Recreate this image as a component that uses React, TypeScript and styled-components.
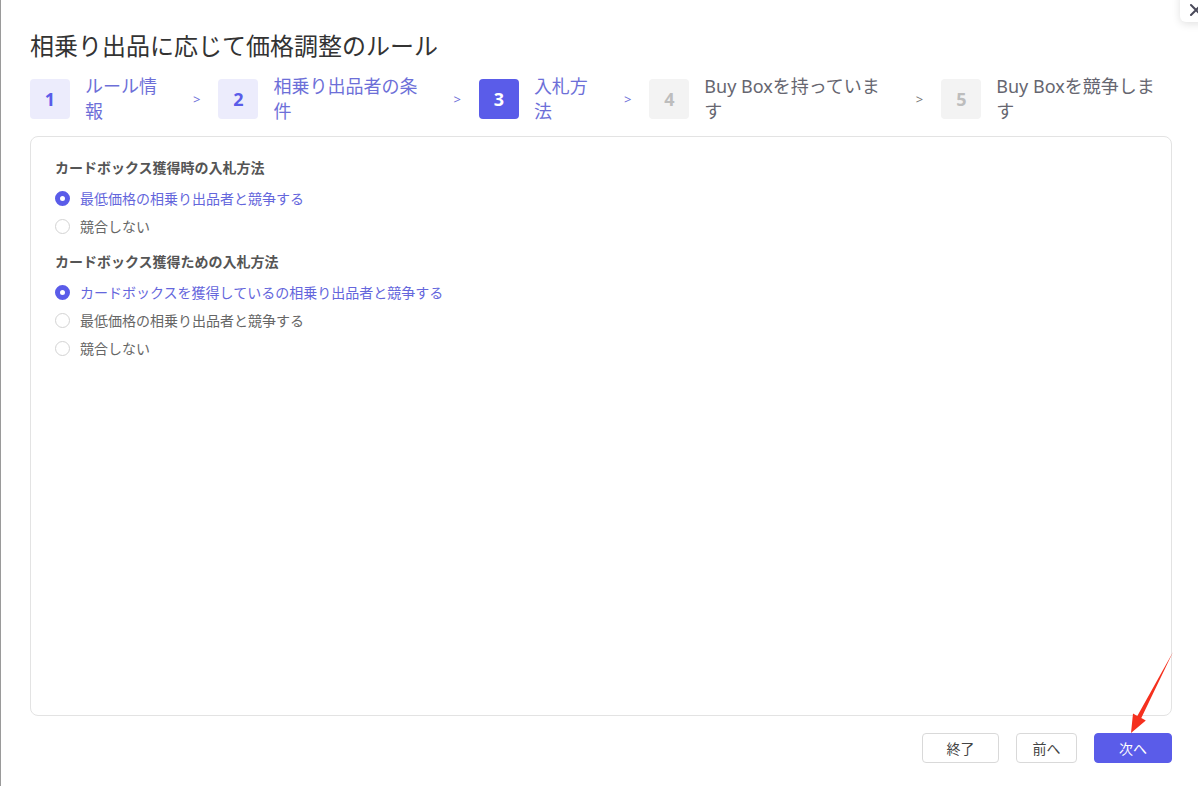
import React from "react";
import styled, { createGlobalStyle } from "styled-components";

const GlobalStyle = createGlobalStyle`
  html, body { margin: 0; padding: 0; background: #ffffff; }
  body { font-family: "Noto Sans", "Noto Sans CJK JP", sans-serif; }
  * { box-sizing: border-box; }
`;

const PRIMARY = "#5a5ce9";

const Page = styled.div`
  position: relative;
  height: 786px;
  display: flex;
  flex-direction: column;
  padding: 29px 26px 23px 29px;
  border-left: 1px solid #9a9a9a;
  overflow: hidden;
`;

const Title = styled.h1`
  margin: 0;
  font-size: 24px;
  line-height: 32px;
  font-weight: 400;
  color: #333333;
  font-family: "Noto Sans CJK JP", sans-serif;
`;

const Steps = styled.div`
  display: flex;
  align-items: center;
  margin-top: 13px;
  height: 50px;
`;

const Step = styled.div`
  display: flex;
  align-items: center;
`;

type StepState = "done" | "active" | "todo";

const StepBox = styled.div<{ $state: StepState }>`
  width: 40px;
  height: 40px;
  border-radius: 4px;
  display: flex;
  align-items: center;
  justify-content: center;
  font-family: "Noto Sans", sans-serif;
  font-weight: 700;
  font-size: 18px;
  background: ${(p) =>
    p.$state === "active" ? PRIMARY : p.$state === "done" ? "#ececfc" : "#f3f3f3"};
  color: ${(p) =>
    p.$state === "active" ? "#ffffff" : p.$state === "done" ? PRIMARY : "#bdbdbd"};
`;

const StepLabel = styled.div<{ $state: StepState }>`
  margin-left: 15px;
  font-size: 18px;
  line-height: 25px;
  white-space: pre-line;
  font-family: "Noto Sans", "Noto Sans CJK JP", sans-serif;
  color: ${(p) => (p.$state === "todo" ? "#666670" : "#6d6fd8")};
`;

const Chevron = styled.span<{ $state: StepState }>`
  margin: 0 18px 0 36px;
  font-size: 13px;
  font-family: "Noto Sans", sans-serif;
  color: ${(p) => (p.$state === "todo" ? "#777" : "#6d6fd8")};
`;

const Card = styled.div`
  flex: 1;
  margin-top: 12px;
  border: 1px solid #e3e3e3;
  border-radius: 8px;
  padding: 19px 24px;
  display: flex;
  flex-direction: column;
  gap: 10px;
`;

const Group = styled.div`
  display: flex;
  flex-direction: column;
`;

const GroupTitle = styled.div`
  font-size: 14px;
  line-height: 22px;
  font-weight: 700;
  color: #555555;
  margin-bottom: 6px;
  font-family: "Noto Sans CJK JP", sans-serif;
`;

const Option = styled.label<{ $checked: boolean }>`
  display: flex;
  align-items: center;
  height: 28px;
  font-size: 14px;
  color: ${(p) => (p.$checked ? "#6466dc" : "#666666")};
  font-family: "Noto Sans CJK JP", sans-serif;
  cursor: pointer;
`;

const RadioDot = styled.span<{ $checked: boolean }>`
  width: 15px;
  height: 15px;
  border-radius: 50%;
  margin-right: 10px;
  background: #ffffff;
  border: ${(p) => (p.$checked ? `5px solid ${PRIMARY}` : "1px solid #d3d3d3")};
  flex-shrink: 0;
`;

const Footer = styled.div`
  margin-top: 17px;
  display: flex;
  justify-content: flex-end;
  gap: 17px;
`;

const Button = styled.button<{ $primary?: boolean; $w: number }>`
  width: ${(p) => p.$w}px;
  height: 30px;
  border-radius: 4px;
  border: 1px solid ${(p) => (p.$primary ? PRIMARY : "#d9d9d9")};
  background: ${(p) => (p.$primary ? PRIMARY : "#ffffff")};
  color: ${(p) => (p.$primary ? "#ffffff" : "#444444")};
  font-size: 14px;
  font-family: "Noto Sans CJK JP", sans-serif;
  padding: 0;
  cursor: pointer;
`;

const CloseButton = styled.div`
  position: absolute;
  top: -10px;
  right: -14px;
  width: 32px;
  height: 32px;
  border-radius: 6px;
  background: #ffffff;
  box-shadow: 0 2px 8px rgba(0, 0, 0, 0.12);
  display: flex;
  align-items: center;
  justify-content: center;
  color: #4a4a5a;
`;

const CloseIcon = styled.svg`
  margin-top: 8px;
`;

const ArrowOverlay = styled.svg`
  position: absolute;
  left: -1px;
  top: 0;
  pointer-events: none;
`;

const steps: { n: number; label: string; state: StepState }[] = [
  { n: 1, label: "ルール情\n報", state: "done" },
  { n: 2, label: "相乗り出品者の条\n件", state: "done" },
  { n: 3, label: "入札方\n法", state: "active" },
  { n: 4, label: "Buy Boxを持っていま\nす", state: "todo" },
  { n: 5, label: "Buy Boxを競争しま\nす", state: "todo" },
];

const groups = [
  {
    title: "カードボックス獲得時の入札方法",
    options: ["最低価格の相乗り出品者と競争する", "競合しない"],
    checked: 0,
  },
  {
    title: "カードボックス獲得ための入札方法",
    options: [
      "カードボックスを獲得しているの相乗り出品者と競争する",
      "最低価格の相乗り出品者と競争する",
      "競合しない",
    ],
    checked: 0,
  },
];

export default function App() {
  return (
    <>
      <GlobalStyle />
      <Page>
        <CloseButton>
          <CloseIcon width="14" height="14" viewBox="0 0 14 14">
            <path d="M2 2 L12 12 M12 2 L2 12" stroke="currentColor" strokeWidth="2" strokeLinecap="round" />
          </CloseIcon>
        </CloseButton>
        <Title>相乗り出品に応じて価格調整のルール</Title>
        <Steps>
          {steps.map((s, i) => (
            <Step key={s.n}>
              <StepBox $state={s.state}>{s.n}</StepBox>
              <StepLabel $state={s.state}>{s.label}</StepLabel>
              {i < steps.length - 1 && <Chevron $state={s.state}>&gt;</Chevron>}
            </Step>
          ))}
        </Steps>
        <Card>
          {groups.map((g) => (
            <Group key={g.title}>
              <GroupTitle>{g.title}</GroupTitle>
              {g.options.map((o, i) => (
                <Option key={o} $checked={i === g.checked}>
                  <RadioDot $checked={i === g.checked} />
                  {o}
                </Option>
              ))}
            </Group>
          ))}
        </Card>
        <Footer>
          <Button $w={77}>終了</Button>
          <Button $w={61}>前へ</Button>
          <Button $w={78} $primary>
            次へ
          </Button>
        </Footer>
        <ArrowOverlay width="1198" height="786" viewBox="0 0 1198 786">
          <polygon
            points="1173,652 1141.3,718 1145.8,720.4 1131,733 1133,713.6 1137.3,716"
            fill="#f5301e"
          />
        </ArrowOverlay>
      </Page>
    </>
  );
}
